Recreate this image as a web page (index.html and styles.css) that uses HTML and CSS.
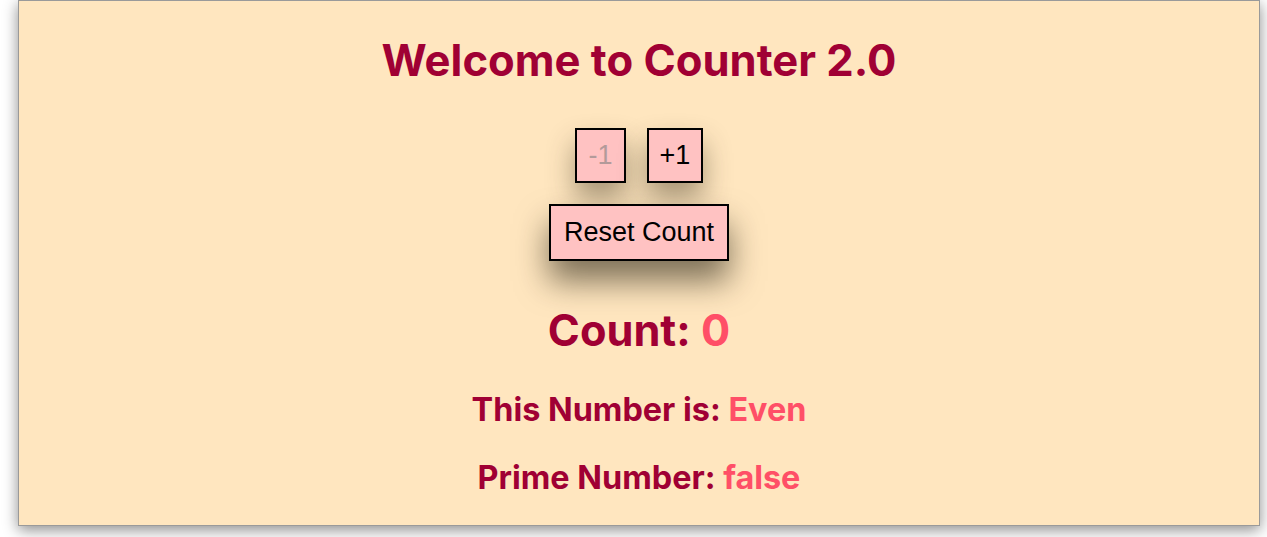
FILE: index.html
```html
<!DOCTYPE html>
<html lang="en">
<head>
<meta charset="utf-8">
<title>Counter 2.0</title>
<link rel="stylesheet" href="styles.css">
</head>
<body>
<main class="card">
  <h1 class="title">Welcome to Counter 2.0</h1>
  <div class="controls">
    <button class="btn btn-small" disabled>-1</button>
    <button class="btn btn-small">+1</button>
  </div>
  <button class="btn btn-reset">Reset Count</button>
  <h2 class="count">Count: <span class="hl">0</span></h2>
  <h3 class="info info-parity">This Number is: <span class="hl">Even</span></h3>
  <h3 class="info info-prime">Prime Number: <span class="hl">false</span></h3>
</main>
</body>
</html>
```

FILE: styles.css
```css
html, body {
  margin: 0;
  padding: 0;
  background: #ffffff;
  height: 100%;
  overflow: hidden;
}

.card {
  box-sizing: border-box;
  width: 1242px;
  height: 526px;
  margin-left: 18px;
  background: #ffe6bf;
  border: 1px solid #9a9a9a;
  box-shadow: 0 4px 14px rgba(0, 0, 0, 0.45);
  display: flex;
  flex-direction: column;
  align-items: center;
  padding-top: 34px;
  font-family: Inter, "Noto Sans", sans-serif;
  color: #a00034;
}

.title {
  margin: 0;
  font-size: 43.6px;
  line-height: 52px;
  font-weight: 700;
}

.controls {
  display: flex;
  gap: 21px;
  margin-top: 41px;
}

.btn {
  font-family: "Liberation Sans", Arial, sans-serif;
  font-size: 27px;
  line-height: 31px;
  color: #000;
  background: #ffc2c2;
  border: 2.5px solid #000;
  border-radius: 0;
  box-shadow: 0 16px 28px rgba(60, 50, 30, 0.45);
  margin: 0;
}

.btn-small {
  padding: 10px 10.5px;
  min-width: 51px;
}

.btn-small:disabled {
  color: #b39a9a;
}

.btn-reset {
  margin-top: 21px;
  padding: 11px 12.5px;
  box-shadow: 0 20px 32px rgba(40, 35, 20, 0.6);
}

.count {
  margin: 43px 0 0;
  font-size: 43.3px;
  line-height: 52px;
  font-weight: 700;
}

.info {
  margin: 0;
  font-size: 32.4px;
  line-height: 39px;
  font-weight: 700;
}

.info-parity {
  margin-top: 34px;
}

.info-prime {
  margin-top: 29px;
}

.hl {
  color: #ff4f67;
}
```
